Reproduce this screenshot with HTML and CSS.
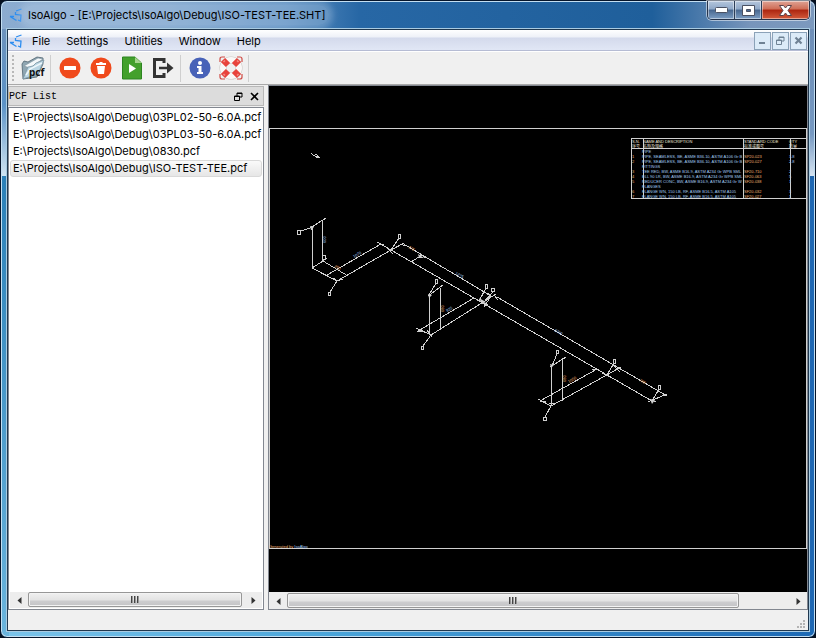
FILE: index.html
```html
<!DOCTYPE html>
<html lang="en">
<head>
    <meta charset="UTF-8">
    <meta name="viewport" content="width=device-width, initial-scale=1.0">
    <title>IsoAlgo</title>
    <link rel="stylesheet" href="styles.css">
</head>
<body>
    <!-- Shared symbols -->
    <svg class="defs" width="0" height="0" aria-hidden="true">
        <symbol id="logo" viewBox="0 0 14 14">
            <path d="M12.500 1L7 3M6.500 4V6.500L12 7L11.500 13L9 12M1 8.500H5M1 8.500L7.500 12.500" fill="none" stroke="#2c8df0" stroke-width="1.300"/>
        </symbol>
        <symbol id="restore" viewBox="0 0 9 9">
            <path d="M3 5V1H8V5H6M3 1.500H8" fill="none" stroke="currentColor"/>
            <path d="M.5 4H5.500V8.500H.5ZM.5 4.500H5.500" fill="none" stroke="currentColor"/>
        </symbol>
        <symbol id="cross" viewBox="0 0 9 9">
            <path d="M1 1L8 8M8 1L1 8" fill="none" stroke="currentColor" stroke-width="1.600"/>
        </symbol>
    </svg>

    <div class="window">
        <!-- Title bar -->
        <header class="titlebar">
            <svg class="logo" width="14" height="14"><use href="#logo"/></svg>
            <h1 class="title">IsoAlgo - [E:\Projects\IsoAlgo\Debug\ISO-TEST-TEE.SHT]</h1>
            <div class="caption-buttons">
                <button class="caption" aria-label="Minimize">
                    <svg width="13" height="6"><rect x=".5" y=".5" width="12" height="5" rx="1" fill="#fff" stroke="#4a5163"/></svg>
                </button>
                <button class="caption" aria-label="Maximize">
                    <svg width="13" height="11"><path d="M.5 .5H12.500V10.500H.5ZM4.500 4.500V6.500H8.500V4.500Z" fill="#fff" fill-rule="evenodd" stroke="#4a5163"/></svg>
                </button>
                <button class="caption caption-close" aria-label="Close">
                    <svg width="13" height="11"><path d="M.5 .5H4.500L6.500 3L8.500 .5H12.500L9 5.500L12.500 10.500H8.500L6.500 8L4.500 10.500H.5L4 5.500Z" fill="#fff" stroke="#5b4149"/></svg>
                </button>
            </div>
        </header>

        <div class="client">
            <!-- Menu -->
            <nav class="menubar">
                <svg class="logo" width="14" height="14"><use href="#logo"/></svg>
                <a href="#file">File</a>
                <a href="#settings">Settings</a>
                <a href="#utilities">Utilities</a>
                <a href="#window">Window</a>
                <a href="#help">Help</a>
                <div class="mdi-buttons">
                    <button aria-label="Minimize document"><svg width="9" height="9"><path d="M1 7H7" stroke="currentColor" stroke-width="2"/></svg></button>
                    <button aria-label="Restore document"><svg width="9" height="9"><use href="#restore"/></svg></button>
                    <button aria-label="Close document"><svg width="9" height="9"><path d="M1.500 1.500L7.500 7.500M7.500 1.500L1.500 7.500" stroke="currentColor" stroke-width="2.200"/></svg></button>
                </div>
            </nav>

            <!-- Toolbar -->
            <div class="toolbar">
                <span class="grip"></span>
                <button aria-label="Open PCF">
                    <svg width="26" height="26" viewBox="0 0 26 26">
                        <path d="M2 9L4 6L8 7L17 2L23 3V9L17 22L3 24Z" fill="#8fa6b2" stroke="#4e626e" stroke-width=".8"/>
                        <path d="M4 11L18 3L23 4L10 13Z" fill="#f4f8fa" stroke="#7b909c" stroke-width=".6"/>
                        <path d="M3 24L8 12L13 11L16 8L24 5L18 19Z" fill="#b9d5e3" stroke="#7d97a4" stroke-width=".8"/>
                        <path d="M6 20L10 14L22 8" fill="none" stroke="#eef7fb" stroke-width="1.500"/>
                        <text class="pcf" x="9" y="21">pcf</text>
                    </svg>
                </button>
                <span class="separator"></span>
                <button aria-label="Remove">
                    <svg width="22" height="22"><circle cx="11" cy="11" r="10.500" fill="#f04a1c"/><rect x="5" y="9" width="12" height="4" rx=".5" fill="#fff"/></svg>
                </button>
                <button aria-label="Delete all">
                    <svg width="22" height="22"><circle cx="11" cy="11" r="10.500" fill="#f04a1c"/><path d="M6 6H9L10 5H12L13 6H16V8H6ZM7 9H15L14 17H8Z" fill="#fff"/></svg>
                </button>
                <button aria-label="Run">
                    <svg width="22" height="24"><path d="M1.500 1H14L20.500 7V23H1.500Z" fill="#43a02c" stroke="#2c8420"/><path d="M14 1V7H20.500Z" fill="#a6d48e"/><path d="M8 8L15 12.500L8 17Z" fill="#fff"/></svg>
                </button>
                <button aria-label="Export">
                    <svg width="24" height="22"><path d="M13 2.500H3.500V19.500H13M13 1V6M13 16V21" fill="none" stroke="#333" stroke-width="3"/><path d="M8 11H18" stroke="#333" stroke-width="2.500"/><path d="M16 5.500L22.500 11L16 16.500Z" fill="#333"/></svg>
                </button>
                <span class="separator"></span>
                <button aria-label="About">
                    <svg width="22" height="22"><circle cx="11" cy="11" r="10.500" fill="#4862b8"/><circle cx="11" cy="6" r="2" fill="#fff"/><path d="M8 9H12.500V15H14V17H8V15H9.500V11H8Z" fill="#fff"/></svg>
                </button>
                <button aria-label="Help">
                    <svg width="26" height="26" viewBox="0 0 26 26">
                        <circle cx="13" cy="13" r="8" fill="none" stroke="#cbc6c3" stroke-width="7"/>
                        <circle cx="13" cy="13" r="8" fill="none" stroke="#faf8f7" stroke-width="6"/>
                        <path d="M5 5L10 10M21 5L16 10M5 21L10 16M21 21L16 16" stroke="#e8433c" stroke-width="6"/>
                        <path d="M5.500 7L7 5.500M19 5.500L20.500 7M5.500 19L7 20.500M19 20.500L20.500 19" stroke="#f58b82" stroke-width="1.500"/>
                        <path d="M7 2H4Q2 2 2 4V7M19 2H22Q24 2 24 4V7M7 24H4Q2 24 2 22V19M19 24H22Q24 24 24 22V19" fill="none" stroke="#cf4b45" stroke-width="1.200"/>
                    </svg>
                </button>
                <span class="separator"></span>
            </div>

            <main class="workspace">
                <!-- PCF list dock -->
                <section class="dock">
                    <div class="dock-title">
                        <h2>PCF List</h2>
                        <button aria-label="Float panel"><svg width="9" height="9"><use href="#restore"/></svg></button>
                        <button aria-label="Close panel"><svg width="9" height="9"><use href="#cross"/></svg></button>
                    </div>
                    <div class="list-frame">
                        <ul class="file-list">
                            <li>E:\Projects\IsoAlgo\Debug\03PL02-50-6.0A.pcf</li>
                            <li>E:\Projects\IsoAlgo\Debug\03PL03-50-6.0A.pcf</li>
                            <li>E:\Projects\IsoAlgo\Debug\0830.pcf</li>
                            <li class="selected">E:\Projects\IsoAlgo\Debug\ISO-TEST-TEE.pcf</li>
                        </ul>
                        <div class="scrollbar">
                            <button class="arrow" aria-label="Scroll list left"><svg width="5" height="7"><path d="M4.500 0V7L.5 3.500Z"/></svg></button>
                            <div class="track"><div class="thumb list-thumb"><i></i><i></i><i></i></div></div>
                            <button class="arrow" aria-label="Scroll list right"><svg width="5" height="7"><path d="M.5 0V7L4.500 3.500Z"/></svg></button>
                        </div>
                    </div>
                </section>

                <!-- Isometric sheet -->
                <section class="sheet">
                    <div class="canvas">
                        <svg class="drawing" viewBox="269 86 538 506" preserveAspectRatio="xMinYMin meet">
                            <path class="line" d="M269 128.500H806.500V548.500H269.500V128.500"/>

                            <!-- Parts table -->
                            <path class="line" d="M631.500 138.500H806.500V198.500H631.500ZM631.500 148.500H806.500M643.500 138V198M743.500 138V198M790.500 138V198"/>
                            <g class="parts head">
                                <text x="632" y="143">S.N.</text><text x="643" y="143">NAME AND DESCRIPTION</text><text x="744" y="143">STANDARD CODE</text><text x="789" y="143">QTY</text>
                                <text x="632" y="148">序号</text><text x="643" y="148">名称及规格</text><text x="744" y="148">标准或图号</text><text x="789" y="148">数量</text>
                            </g>
                            <g class="parts cool">
                                <text x="642" y="153">PIPE</text>
                                <text x="642" y="158">PIPE, SEAMLESS, BE, ASME B36.10, ASTM A106 Gr B</text>
                                <text x="642" y="163">PIPE, SEAMLESS, BE, ASME B36.10, ASTM A106 Gr B</text>
                                <text x="642" y="168">FITTINGS</text>
                                <text x="642" y="173">TEE RED, BW, ASME B16.9, ASTM A234 Gr WPB SML</text>
                                <text x="642" y="178">ELL 90 LR, BW, ASME B16.9, ASTM A234 Gr WPB SML</text>
                                <text x="642" y="183">REDUCER CONC, BW, ASME B16.9, ASTM A234 Gr W</text>
                                <text x="642" y="188">FLANGES</text>
                                <text x="642" y="193">FLANGE WN, 150 LB, RF, ASME B16.5, ASTM A105</text>
                                <text x="642" y="198">FLANGE WN, 150 LB, RF, ASME B16.5, ASTM A105</text>
                                <text x="789" y="158">3.8</text><text x="789" y="163">2.8</text>
                                <text x="789" y="173">2</text><text x="789" y="178">5</text><text x="789" y="183">1</text><text x="789" y="193">3</text><text x="789" y="198">1</text>
                            </g>
                            <g class="parts warm">
                                <text x="632" y="158">1</text><text x="632" y="163">2</text><text x="632" y="173">3</text><text x="632" y="178">4</text><text x="632" y="183">5</text><text x="632" y="193">6</text><text x="632" y="198">7</text>
                                <text x="744" y="158">SP20-023</text><text x="744" y="163">SP20-027</text><text x="744" y="173">SF20-710</text><text x="744" y="178">SF20-063</text><text x="744" y="183">SF20-038</text><text x="744" y="193">SF20-032</text><text x="744" y="198">SF20-027</text>
                            </g>
                            <text class="parts warm" x="269" y="548">Generated by <tspan class="cool">IsoAlgo</tspan></text>

                            <!-- North arrow -->
                            <path class="line" d="M311 153L314 156L316 154L320 158L313 155L318 158"/>

                            <!-- First riser and elbow -->
                            <path class="line" d="M326 218L310 228L301 231M312.500 226V268M322.500 220V261M312 268L337 281L391 250L404 243M312 268L323 261L348 276M327 275L381 244M311 230L314 225M321 262L327 258M333 278L337 281L343 279M337 281L330 292"/>

                            <!-- Main run -->
                            <path class="line" d="M377 242L391 250L652 401M391 250L399 238M402 243L491 296M497 297L667 396M411 262L422 255L426 258M648 402L667 394M652 401L659 389M607 375L614 363M388 249L393 254M649 399L656 402M379 244H384M400 244L406 246"/>

                            <!-- First branch -->
                            <path class="line" d="M443 285L428 296M429.500 295V335M440.500 288V330M416 328L431 335L496 294M418 331L474 298M479 301L486 288M483 303L493 292M431 335L423 346M429 295L436 283M478 300L488 305M484 307L491 296L488 293M417 331H422M494 295L498 300M427 330L432 337"/>

                            <!-- Second branch -->
                            <path class="line" d="M566 357L550 367M551.500 366V405M562.500 358V401M538 399L551 406L621 367M540 401L597 369M552 366L557 354M551 406L545 417M549 404L556 403M602 373L610 377M611 363L620 372M540 401H546M592 369H598"/>

                            <!-- Weld tags -->
                            <path class="tag" d="M297.500 230.500h3v4h-3zM322.500 255.500h3v4h-3zM398.500 234.500h2v4h-2zM328.500 292.500h2v3h-2zM435.500 279.500h2v4h-2zM485.500 284.500h2v4h-2zM491.500 288.500h3v3h-3zM421.500 346.500h2v3h-2zM556.500 350.500h2v3h-2zM613.500 359.500h2v4h-2zM658.500 385.500h2v4h-2zM543.500 417.500h3v3h-3z"/>
                            <path class="valve" d="M310 226l4 1l-3 3zM428 294l4 1l-3 3zM479 298l7 4l-4 2zM550 364l4 1l-3 3zM650 399l5 1l-3 4zM418 254l6 4l-5 0z"/>

                            <!-- Dimensions -->
                            <g class="dim">
                                <text class="cool" transform="translate(354 258) rotate(-30)">1070</text>
                                <text class="warm" transform="translate(334 267) rotate(30)">250</text>
                                <text class="warm" transform="translate(408 248) rotate(30)">375</text>
                                <text class="cool" transform="translate(455 274) rotate(30)">1275</text>
                                <text class="cool" transform="translate(447 312) rotate(-30)">925</text>
                                <text class="cool" transform="translate(554 331) rotate(30)">2760</text>
                                <text class="warm" transform="translate(569 383) rotate(-30)">1050</text>
                                <text class="warm" transform="translate(639 381) rotate(30)">780</text>
                                <text class="cool" transform="translate(326 243) rotate(-90)">600</text>
                                <text class="warm" transform="translate(444 312) rotate(-90)">680</text>
                                <text class="warm" transform="translate(566 382) rotate(-90)">680</text>
                            </g>
                        </svg>
                    </div>
                    <div class="scrollbar sheet-scrollbar">
                        <button class="arrow" aria-label="Scroll sheet left"><svg width="5" height="7"><path d="M4.500 0V7L.5 3.500Z"/></svg></button>
                        <div class="track"><div class="thumb sheet-thumb"><i></i><i></i><i></i></div></div>
                        <button class="arrow" aria-label="Scroll sheet right"><svg width="5" height="7"><path d="M.5 0V7L4.500 3.500Z"/></svg></button>
                    </div>
                </section>
            </main>

            <footer class="statusbar">
                <svg width="9" height="9" fill="#b4b4b4"><path d="M6 0h2v2h-2zM3 3h2v2h-2zM6 3h2v2h-2zM0 6h2v2h-2zM3 6h2v2h-2zM6 6h2v2h-2z"/></svg>
            </footer>
        </div>
    </div>
</body>
</html>
```

FILE: styles.css
```css
:root {
    --face: #f0f0f0;
    --border: #828790;
    --drawing: #d0d0d0;
    --ui-font: Inter, "Open Sans", sans-serif;
}

* {
    box-sizing: border-box;
}

body {
    margin: 0;
    height: 100vh;
    background: #06101f;
    font-family: var(--ui-font);
    font-size: 11px;
    color: #000;
}

h1, h2, ul {
    margin: 0;
    padding: 0;
    font-size: 11px;
    font-weight: normal;
}

button {
    display: flex;
    align-items: center;
    justify-content: center;
    margin: 0;
    padding: 0;
    border: none;
    background: none;
    color: inherit;
}

.defs {
    position: absolute;
}

/* Window frame */
.window {
    display: flex;
    flex-direction: column;
    height: 100vh;
    border: 1px solid #06152b;
    border-radius: 7px;
    box-shadow: inset 0 0 0 1px #c4dff2;
    background:
        linear-gradient(to right, #8cacd0 0%, #7da3cc 20%, #5a8dc0 35%, #2767a5 44%, #1f5f9b 80%, #7795bb 92%, #7c99be 100%) top / 100% 28px no-repeat,
        linear-gradient(to bottom, #6d93bd 0%, #5b92c6 50%, #cfe4f2 98%, #2b80b8 98%, #3387bc 110%) left 28px / 8px 150px no-repeat,
        linear-gradient(to bottom, #6f8fb8 0%, #7699c2 70%, #d6e4f2 98%, #1f64ac 98%) right 28px / 8px 150px no-repeat,
        linear-gradient(to bottom, #2b80b8, #83c9ec) left 178px / 8px 100% no-repeat,
        linear-gradient(to right, #7bc4ea 0%, #4aa5da 40%, #1c69b5 100%) bottom / 100% 8px no-repeat,
        #1f68b4;
}

.titlebar {
    display: flex;
    flex: none;
    height: 28px;
    padding: 0 5px 0 8px;
}

.titlebar .logo {
    margin: 7px 0 0;
}

.title {
    height: 20px;
    margin: 4px 0 0 0;
    padding: 0 4px 0 5px;
    border-radius: 10px;
    background: rgba(200, 220, 238, 0.3);
    box-shadow: 0 0 6px 4px rgba(200, 220, 238, 0.3);
    line-height: 20px;
    white-space: nowrap;
}

.caption-buttons {
    display: flex;
    height: 19px;
    margin-left: auto;
    border: 1px solid #26344c;
    border-top: none;
    border-radius: 0 0 5px 5px;
    box-shadow: 0 0 0 1px rgba(255, 255, 255, 0.5);
    overflow: hidden;
}

.caption {
    width: 27px;
    border-right: 1px solid #2c3d57;
    box-shadow: inset 0 0 0 1px rgba(255, 255, 255, 0.45);
    background: linear-gradient(#b5c6dc 0%, #8fa8c8 45%, #48678f 50%, #7d9ec4 100%);
}

.caption-close {
    width: 47px;
    border-right: none;
    background: linear-gradient(#dfa395 0%, #cf6c55 45%, #ac2510 50%, #d35b3c 100%);
}

.client {
    display: flex;
    flex: 1;
    flex-direction: column;
    min-height: 0;
    margin: 0 6px 6px;
    border: 1px solid #20384f;
    box-shadow: 0 0 0 1px #a9cbe2;
    background: var(--face);
}

/* Menu bar */
.menubar {
    display: flex;
    flex: none;
    align-items: center;
    height: 22px;
    padding: 0 1px;
    border-bottom: 1px solid #fff;
    box-shadow: inset 0 -1px #b6bcd4;
    background: linear-gradient(#fff 0, #eef1f8 7px, #d4daec 8px, #e2e8f6 100%);
}

.menubar .logo {
    margin-right: 1px;
}

.menubar a {
    padding: 0 8px;
    line-height: 20px;
    color: #000;
    text-decoration: none;
}

.mdi-buttons {
    display: flex;
    gap: 1px;
    margin-left: auto;
}

.mdi-buttons button {
    width: 17px;
    height: 18px;
    border: 1px solid #8ba2b8;
    background: #dcebf8;
    color: #6f8294;
}

/* Toolbar */
.toolbar {
    display: flex;
    flex: none;
    align-items: center;
    height: 33px;
    padding-left: 4px;
    border-bottom: 1px solid #a9a9a9;
}

.toolbar button {
    width: 31px;
    height: 30px;
}

.grip {
    width: 2px;
    height: 26px;
    margin-right: 3px;
    background: repeating-linear-gradient(#b8b8b8 0 2px, transparent 2px 4px);
}

.separator {
    width: 1px;
    height: 27px;
    margin: 0 3px 0 2px;
    background: #cfcfcf;
}

.pcf {
    font: bold 10px "Noto Sans", sans-serif;
    fill: #111;
}

/* Workspace */
.workspace {
    display: grid;
    flex: 1;
    grid-template-columns: 32% 1fr;
    column-gap: 4px;
    min-height: 0;
}

.dock {
    display: flex;
    flex-direction: column;
    min-width: 0;
}

.dock-title {
    display: flex;
    align-items: center;
    gap: 7px;
    height: 20px;
    margin: 1px 0;
    padding: 0 4px 0 0;
    border: 1px solid #b8b8b8;
    background: #dcdcdc;
}

.dock-title h2 {
    flex: 1;
    font: 10px "Liberation Mono", monospace;
}

.list-frame {
    display: flex;
    flex: 1;
    flex-direction: column;
    min-height: 0;
    padding: 1px;
    border: 1px solid var(--border);
    background: #fff;
}

.file-list {
    flex: 1;
    overflow: hidden;
    list-style: none;
}

.file-list li {
    height: 17px;
    padding-left: 2px;
    border: 1px solid transparent;
    line-height: 15px;
    white-space: nowrap;
}

.file-list .selected {
    border-color: #d9d9d9;
    border-radius: 3px;
    background: linear-gradient(#fafafa, #e6e6e6);
}

.sheet {
    display: flex;
    flex-direction: column;
    min-width: 0;
    border: 1px solid var(--border);
}

.canvas {
    flex: 1;
    min-height: 0;
    background: #000;
}

.drawing {
    display: block;
    width: 100%;
    height: 100%;
}

.line, .tag {
    fill: none;
    stroke: var(--drawing);
    stroke-width: 1;
    shape-rendering: crispEdges;
}

.valve {
    fill: var(--drawing);
}

.parts {
    font: 4px "Liberation Sans", "Noto Sans CJK SC", sans-serif;
}

.dim {
    font: 4px "Liberation Sans", sans-serif;
}

.head {
    fill: #f0e8da;
}

.cool {
    fill: #a4ccf4;
}

.warm {
    fill: #f0b070;
}

/* Scroll bars */
.scrollbar {
    display: flex;
    flex: none;
    height: 16px;
    background: #ededed;
}

.sheet-scrollbar {
    height: 17px;
    padding-top: 1px;
}

.arrow {
    width: 18px;
}

.arrow svg {
    fill: #333;
}

.track {
    flex: 1;
}

.thumb {
    display: flex;
    align-items: center;
    justify-content: center;
    gap: 1px;
    height: 15px;
    border: 1px solid #979797;
    border-radius: 2px;
    box-shadow: inset 0 0 0 1px #f3f3f3;
    background: linear-gradient(#f0f0f0 0, #e3e3e3 7px, #cdcdcf 8px, #c4c4c6 100%);
}

.thumb i {
    width: 2px;
    height: 7px;
    border-right: 1px solid #999;
    background: #444;
}

.list-thumb {
    width: 99%;
}

.sheet-thumb {
    width: 90%;
}

.statusbar {
    display: flex;
    flex: none;
    align-items: flex-end;
    justify-content: flex-end;
    height: 20px;
    padding: 0 2px 1px;
}
```
